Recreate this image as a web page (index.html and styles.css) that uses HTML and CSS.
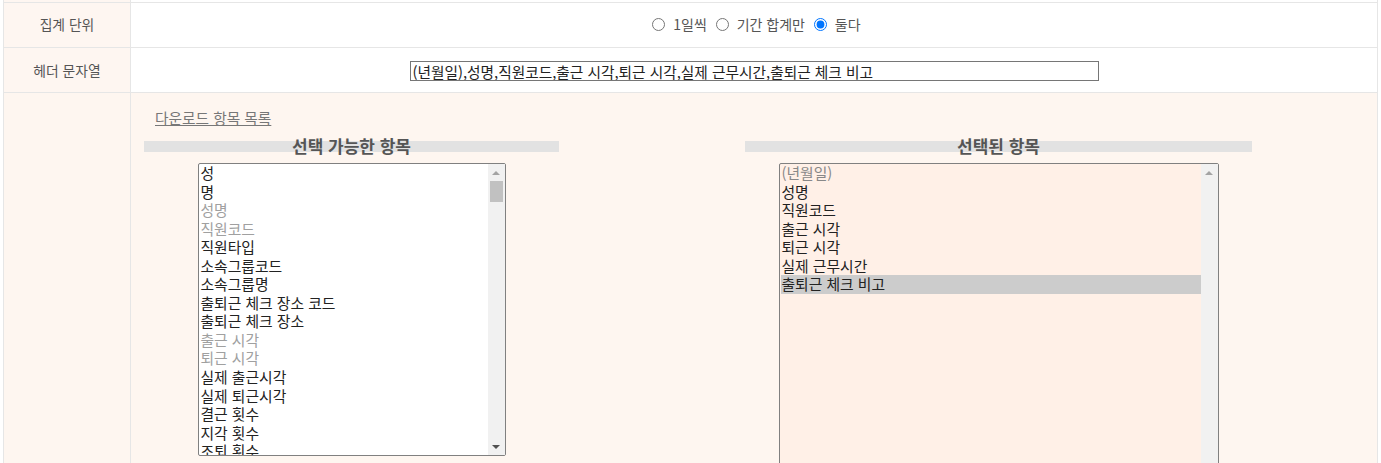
FILE: index.html
```html
<!DOCTYPE html>
<html lang="ko">
<head>
<meta charset="utf-8">
<title>다운로드 설정</title>
<link rel="stylesheet" href="styles.css">
</head>
<body>
<table class="form">
  <tr class="stub"><th></th><td></td></tr>
  <tr class="row row-unit">
    <th>집계 단위</th>
    <td class="center">
      <label class="opt"><input type="radio" name="unit"> 1일씩</label>
      <label class="opt"><input type="radio" name="unit"> 기간 합계만</label>
      <label class="opt"><input type="radio" name="unit" checked> 둘다</label>
    </td>
  </tr>
  <tr class="row">
    <th>헤더 문자열</th>
    <td class="center">
      <input class="header-input" type="text" value="(년월일),성명,직원코드,출근 시각,퇴근 시각,실제 근무시간,출퇴근 체크 비고">
    </td>
  </tr>
  <tr class="tinted">
    <th></th>
    <td>
      <div class="dl-wrap">
        <a class="dl-link" href="#">다운로드 항목 목록</a>
        <div class="pickers">
          <div class="pick-col">
            <div class="pick-title">선택 가능한 항목</div>
            <div class="listbox listbox-left">
              <div class="items">
                <div class="item">성</div>
                <div class="item">명</div>
                <div class="item off">성명</div>
                <div class="item off">직원코드</div>
                <div class="item">직원타입</div>
                <div class="item">소속그룹코드</div>
                <div class="item">소속그룹명</div>
                <div class="item">출퇴근 체크 장소 코드</div>
                <div class="item">출퇴근 체크 장소</div>
                <div class="item off">출근 시각</div>
                <div class="item off">퇴근 시각</div>
                <div class="item">실제 출근시각</div>
                <div class="item">실제 퇴근시각</div>
                <div class="item">결근 횟수</div>
                <div class="item">지각 횟수</div>
                <div class="item">조퇴 횟수</div>
              </div>
              <div class="sbar">
                <div class="arrow"><span class="tri-up"></span></div>
                <div class="thumb"></div>
                <div class="sbar-fill"></div>
                <div class="arrow"><span class="tri-down"></span></div>
              </div>
            </div>
          </div>
          <div class="pick-col">
            <div class="pick-title">선택된 항목</div>
            <div class="listbox listbox-right">
              <div class="items">
                <div class="item dim">(년월일)</div>
                <div class="item">성명</div>
                <div class="item">직원코드</div>
                <div class="item">출근 시각</div>
                <div class="item">퇴근 시각</div>
                <div class="item">실제 근무시간</div>
                <div class="item sel">출퇴근 체크 비고</div>
              </div>
              <div class="sbar">
                <div class="arrow"><span class="tri-up"></span></div>
                <div class="sbar-fill"></div>
              </div>
            </div>
          </div>
        </div>
      </div>
    </td>
  </tr>
</table>
</body>
</html>
```

FILE: styles.css
```css
html, body {
  margin: 0;
  padding: 0;
  background: #fff;
  font-family: "Noto Sans CJK KR", "Noto Sans", sans-serif;
  overflow: hidden;
}

.form {
  margin-left: 3px;
  width: 1375px;
  border-collapse: collapse;
  table-layout: fixed;
}

.form th,
.form td {
  border: 1px solid #e6e6e6;
  padding: 0;
}

.form th {
  width: 126px;
  background: #fef6f1;
  font-weight: normal;
  font-size: 13.8px;
  color: #555;
  text-align: center;
}

.stub th,
.stub td {
  height: 2px;
  border-top: none;
}

.row th,
.row td {
  height: 44px;
}

.row-unit th,
.row-unit td {
  height: 42px;
  padding-bottom: 2px;
}

.center {
  text-align: center;
  font-size: 14px;
  color: #555;
}

.opt input {
  margin: 3px 4px 0 5px;
  vertical-align: -1px;
}

.header-input {
  box-sizing: border-box;
  width: 689px;
  height: 20px;
  border: 1px solid #767676;
  padding: 0 2px;
  font-family: "Noto Sans CJK KR", sans-serif;
  font-size: 14.7px;
  color: #222;
  background: #fff;
  vertical-align: middle;
}

.tinted th,
.tinted td {
  background: #fef6f0;
  vertical-align: top;
}

.dl-wrap {
  padding: 12px 0 0 13px;
  height: 380px;
}

.dl-link {
  display: inline-block;
  margin-left: 11px;
  font-size: 14.7px;
  line-height: 20px;
  color: #777;
  text-decoration: underline;
}

.pickers {
  display: grid;
  grid-template-columns: 415px 507px;
  column-gap: 186px;
  margin-top: 12px;
}

.pick-title {
  height: 11px;
  line-height: 10px;
  background: #e2e2e2;
  text-align: center;
  font-weight: bold;
  font-size: 17px;
  color: #555;
}

.listbox {
  display: flex;
  margin: 11px auto 0;
  border: 1px solid #808080;
  border-radius: 2px;
  box-sizing: border-box;
}

.listbox-left {
  width: 308px;
  height: 293px;
  background: #fff;
}

.listbox-right {
  width: 440px;
  height: 330px;
  background: #fff0e7;
}

.items {
  flex: 1;
  overflow: hidden;
  padding: 0 0 0 1px;
}

.item {
  height: 18.55px;
  line-height: 18.55px;
  font-size: 14.8px;
  padding-left: 1px;
  color: #222;
  white-space: nowrap;
}

.item.off {
  color: #a0a0a0;
}

.item.dim {
  color: #888;
}

.item.sel {
  background: #cccccc;
}

.sbar {
  width: 17px;
  background: #f1f1f1;
  display: flex;
  flex-direction: column;
}

.arrow {
  height: 17px;
  display: flex;
  align-items: center;
  justify-content: center;
}

.tri-up {
  width: 0;
  height: 0;
  border-left: 4px solid transparent;
  border-right: 4px solid transparent;
  border-bottom: 4px solid #a3a3a3;
}

.tri-down {
  width: 0;
  height: 0;
  border-left: 4px solid transparent;
  border-right: 4px solid transparent;
  border-top: 4px solid #505050;
}

.thumb {
  height: 21px;
  margin: 0 2px;
  background: #c1c1c1;
}

.sbar-fill {
  flex: 1;
}
```
